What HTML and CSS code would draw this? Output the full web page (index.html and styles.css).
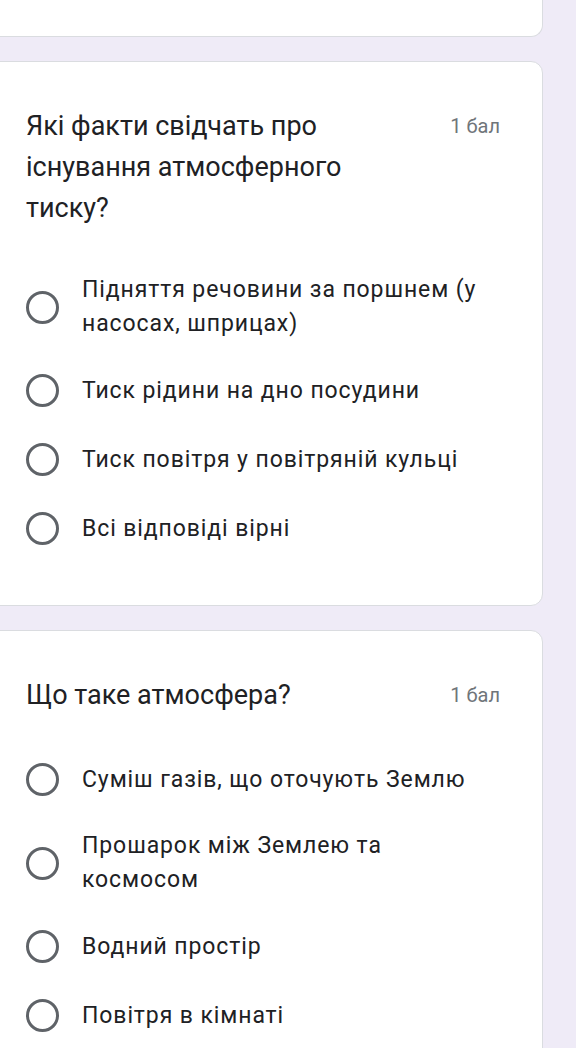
FILE: index.html
```html
<!DOCTYPE html>
<html lang="uk">
<head>
    <meta charset="UTF-8">
    <meta name="viewport" content="width=device-width, initial-scale=1.0">
    <title>Тест</title>
    <link rel="stylesheet" href="styles.css">
</head>
<body>
    <div class="form">
        <div class="card card-top">
            <div class="required">Обов'язкове поле</div>
        </div>

        <div class="card">
            <div class="question-head">
                <div class="question-title">Які факти свідчать про існування атмосферного тиску?</div>
                <div class="points">1 бал</div>
            </div>
            <div class="options">
                <label class="option">
                    <span class="radio"></span>
                    <span class="option-text">Підняття речовини за поршнем (у насосах, шприцах)</span>
                </label>
                <label class="option">
                    <span class="radio"></span>
                    <span class="option-text">Тиск рідини на дно посудини</span>
                </label>
                <label class="option">
                    <span class="radio"></span>
                    <span class="option-text">Тиск повітря у повітряній кульці</span>
                </label>
                <label class="option">
                    <span class="radio"></span>
                    <span class="option-text">Всі відповіді вірні</span>
                </label>
            </div>
        </div>

        <div class="card">
            <div class="question-head">
                <div class="question-title">Що таке атмосфера?</div>
                <div class="points">1 бал</div>
            </div>
            <div class="options">
                <label class="option">
                    <span class="radio"></span>
                    <span class="option-text">Суміш газів, що оточують Землю</span>
                </label>
                <label class="option">
                    <span class="radio"></span>
                    <span class="option-text">Прошарок між Землею та космосом</span>
                </label>
                <label class="option">
                    <span class="radio"></span>
                    <span class="option-text">Водний простір</span>
                </label>
                <label class="option">
                    <span class="radio"></span>
                    <span class="option-text">Повітря в кімнаті</span>
                </label>
            </div>
        </div>
    </div>
</body>
</html>
```

FILE: styles.css
```css
body {
    margin: 0;
    background-color: #efebf7;
    font-family: Roboto, "Noto Sans", sans-serif;
    color: #202124;
    overflow: hidden;
}
.form {
    display: flex;
    flex-direction: column;
    gap: 24px;
    padding-right: 33px;
    margin-left: -20px;
}
.card {
    background-color: white;
    border: 1px solid #dadce0;
    border-radius: 12px;
    padding: 44px 42px 42px 45px;
}
.card-top {
    margin-top: -32px;
    padding-top: 0;
    padding-bottom: 38px;
    border-top: none;
    border-radius: 0 0 12px 12px;
}
.required {
    color: #d93025;
    font-size: 20px;
    line-height: 30px;
    padding-left: 12px;
}
.question-head {
    display: flex;
    justify-content: space-between;
    align-items: flex-start;
    gap: 40px;
}
.question-title {
    font-size: 27px;
    line-height: 41px;
    max-width: 385px;
}
.points {
    font-size: 20px;
    line-height: 41px;
    color: #70757a;
    white-space: nowrap;
}
.options {
    display: flex;
    flex-direction: column;
    margin-top: 29px;
}
.option {
    display: flex;
    align-items: center;
    gap: 23px;
    padding: 18px 0;
    cursor: pointer;
}
.radio {
    flex: none;
    width: 27px;
    height: 27px;
    border: 3.5px solid #5f6368;
    border-radius: 50%;
}
.option-text {
    font-size: 23px;
    line-height: 34px;
    letter-spacing: 0.9px;
    max-width: 412px;
    margin: -3px 0;
}
```
